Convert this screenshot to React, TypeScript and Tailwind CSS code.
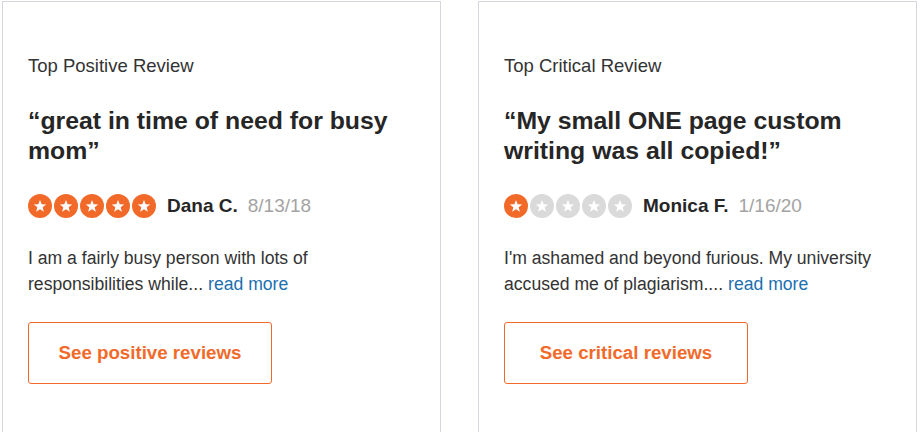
import React from "react";

const ORANGE = "#f26a2a";

function Star({ on }: { on: boolean }) {
  return (
    <svg width="24" height="24" viewBox="0 0 24 24" className="block shrink-0">
      <circle cx="12" cy="12" r="12" fill={on ? ORANGE : "#dadada"} />
      <polygon
        fill="#fff"
        points="12,5.9 13.65,10.13 18.18,10.39 14.66,13.27 15.82,17.66 12,15.2 8.18,17.66 9.34,13.27 5.82,10.39 10.35,10.13"
      />
    </svg>
  );
}

type Review = {
  label: string;
  title: string;
  rating: number;
  name: string;
  date: string;
  body: string;
  cta: string;
};

const reviews: Review[] = [
  {
    label: "Top Positive Review",
    title: "“great in time of need for busy mom”",
    rating: 5,
    name: "Dana C.",
    date: "8/13/18",
    body: "I am a fairly busy person with lots of responsibilities while...",
    cta: "See positive reviews",
  },
  {
    label: "Top Critical Review",
    title: "“My small ONE page custom writing was all copied!”",
    rating: 1,
    name: "Monica F.",
    date: "1/16/20",
    body: "I'm ashamed and beyond furious. My university accused me of plagiarism....",
    cta: "See critical reviews",
  },
];

function ReviewCard({ r }: { r: Review }) {
  return (
    <div className="h-[460px] w-[439px] shrink-0 border border-[#d4d8dd] bg-white px-[25px] pt-[52px]">
      <div className="text-[18.5px] leading-[24px] text-[#333]">{r.label}</div>

      <h3 className="mt-[28px] text-[24.8px] font-bold leading-[30px] text-[#262626]">
        {r.title}
      </h3>

      <div className="mt-[28px] flex h-[24px] items-center">
        <div className="flex gap-[2px]">
          {[0, 1, 2, 3, 4].map((i) => (
            <Star key={i} on={i < r.rating} />
          ))}
        </div>
        <span className="ml-[11px] text-[19px] font-bold leading-[24px] text-[#262626]">
          {r.name}
        </span>
        <span className="ml-[10px] text-[19px] leading-[24px] text-[#a3a3a3]">{r.date}</span>
      </div>

      <p className="mt-[28px] text-[17.6px] leading-[25.5px] text-[#333]">
        {r.body}
        <a className="ml-[5px] whitespace-nowrap text-[#1d6fb0]">read more</a>
      </p>

      <button
        type="button"
        className="mt-[25px] flex h-[62px] w-[244px] items-center justify-center rounded-[3px] border border-[#f26a2a] bg-white text-[18.7px] font-bold text-[#f26a2a]"
      >
        {r.cta}
      </button>
    </div>
  );
}

export default function App() {
  return (
    <div
      className="flex h-[432px] w-[920px] gap-[37px] overflow-hidden bg-white pl-[2px] pt-[1px]"
      style={{ fontFamily: '"Liberation Sans", Arial, sans-serif' }}
    >
      {reviews.map((r) => (
        <ReviewCard key={r.label} r={r} />
      ))}
    </div>
  );
}
